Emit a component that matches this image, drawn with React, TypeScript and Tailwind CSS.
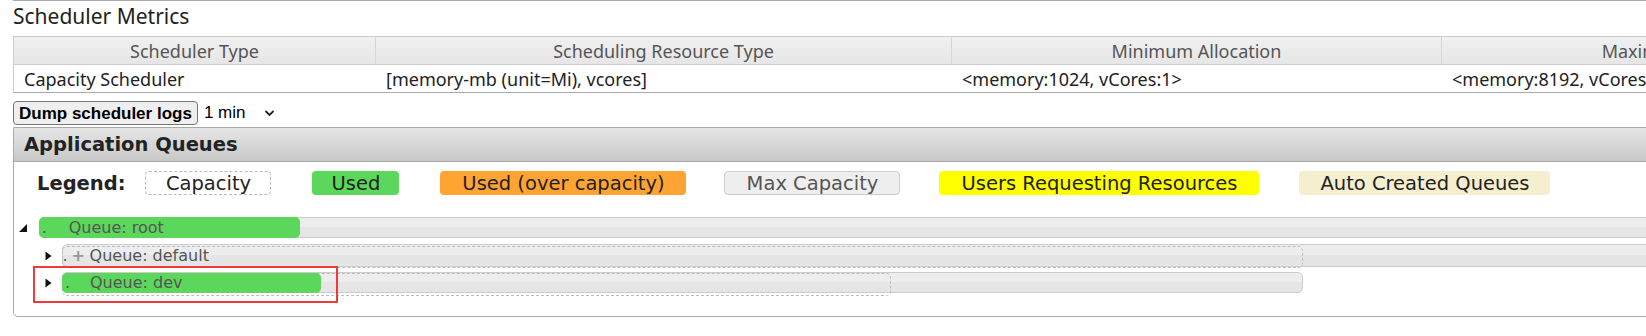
import { FC } from 'react';

type Legend = { label: string; className: string };

const legendItems: Legend[] = [
  { label: 'Capacity', className: 'ml-[20px] w-[126px] border border-dashed border-[#bbb] bg-white text-[#222]' },
  { label: 'Used', className: 'ml-[41px] w-[87px] bg-[#5bd75b] text-[#222]' },
  { label: 'Used (over capacity)', className: 'ml-[41px] w-[246px] bg-[#ffa333] text-[#222]' },
  { label: 'Max Capacity', className: 'ml-[38px] w-[176px] border border-[#ccc] bg-[#eee] text-[#555]' },
  { label: 'Users Requesting Resources', className: 'ml-[39px] w-[320px] bg-[#ffff00] text-[#222]' },
  { label: 'Auto Created Queues', className: 'ml-[40px] w-[251px] bg-[#f5efd0] text-[#222]' },
];

const headers = ['Scheduler Type', 'Scheduling Resource Type', 'Minimum Allocation', 'Maximum Allocation'];
const values = ['Capacity Scheduler', '[memory-mb (unit=Mi), vcores]', '<memory:1024, vCores:1>', '<memory:8192, vCores:4>'];

const Expanded = () => (
  <svg width="8" height="8" viewBox="0 0 8 8" className="shrink-0">
    <polygon points="8,0 8,8 0,8" fill="#111" />
  </svg>
);

const Collapsed = () => (
  <svg width="7" height="10" viewBox="0 0 7 10" className="shrink-0">
    <polygon points="0.5,0.5 6.5,5 0.5,9.5" fill="#111" />
  </svg>
);

const barBg = 'bg-[linear-gradient(#ededed_50%,#e5e5e5_50%)]';

const QueueTree: FC = () => (
  <div className="font-['DejaVu_Sans',sans-serif] text-[16px] text-[#555]">
    {/* root */}
    <div className="mt-[22px] flex h-[21px] items-center">
      <div className="ml-[5px] w-[20px]">
        <Expanded />
      </div>
      <div className={`relative h-[21px] w-[1900px] rounded-[5px] border border-[#ccc] ${barBg}`}>
        <div className="absolute -top-px -left-px h-[21px] w-[261px] rounded-[5px] bg-[#5bd75b]" />
        <div className="relative flex h-full items-center leading-none">
          <span className="ml-[2px] w-[27px]">.</span>
          <span>Queue: root</span>
        </div>
      </div>
    </div>

    {/* default */}
    <div className="mt-[6px] flex h-[23px] items-center">
      <div className="ml-[31px] w-[17px]">
        <Collapsed />
      </div>
      <div className={`relative h-[23px] w-[1900px] rounded-l-[5px] border border-[#ccc] ${barBg}`}>
        <div className="absolute top-px -left-px h-[22px] w-[1241px] rounded-[5px] border border-dashed border-[#bbb]" />
        <div className="relative flex h-full items-center leading-none">
          <span className="w-[9px]">.</span>
          <span className="w-[18px] font-bold text-[#999]">+</span>
          <span>Queue: default</span>
        </div>
      </div>
    </div>

    {/* dev */}
    <div className="mt-[5px] flex h-[21px] items-start">
      <div className="mt-[6px] ml-[31px] w-[17px]">
        <Collapsed />
      </div>
      <div className={`relative h-[21px] w-[1241px] rounded-[5px] border border-[#ccc] ${barBg}`}>
        <div className="absolute top-0 -left-px h-[23px] w-[829px] rounded-[5px] border border-dashed border-[#bbb]" />
        <div className="absolute top-0 -left-px h-[20px] w-[259px] rounded-[5px] bg-[#5bd75b]" />
        <div className="relative flex h-full items-center leading-none">
          <span className="ml-[2px] w-[25px]">.</span>
          <span>Queue: dev</span>
        </div>
      </div>
    </div>
  </div>
);

const App: FC = () => (
  <div className="relative h-[336px] w-[1646px] overflow-hidden bg-white">
    <div className="w-[2000px] pl-[13px]">
      <div className="h-px bg-[#aaa]" />
      <h3 className="mt-px h-[28px] font-['Noto_Sans',sans-serif] text-[21px] leading-[28px] text-[#222]">
        Scheduler Metrics
      </h3>

      <div className="mt-[6px] font-['Noto_Sans',sans-serif] text-[18px]">
        <div className="grid h-[29px] grid-cols-[362px_576px_490px_494px] border-y border-l border-[#ccc] bg-[linear-gradient(#f0f0f0,#e6e6e6)] text-[#555]">
          {headers.map((h) => (
            <div key={h} className="flex items-center justify-center border-r border-[#d6d6d6] leading-none">
              {h}
            </div>
          ))}
        </div>
        <div className="grid h-[28px] grid-cols-[362px_576px_490px_494px] border-b border-l border-[#aaa] border-l-[#ccc] text-[#222]">
          {values.map((v) => (
            <div key={v} className="flex items-center pl-[10px] leading-none">
              {v}
            </div>
          ))}
        </div>
      </div>

      <div className="mt-[8px] flex h-[24px] items-center font-['Liberation_Sans',sans-serif] text-[17px]">
        <button className="h-[24px] rounded-[4px] border border-[#767676] bg-[#efefef] px-[5px] font-bold leading-none text-black">
          Dump scheduler logs
        </button>
        <span className="ml-[6px] text-black">1 min</span>
        <svg width="11" height="8" viewBox="0 0 11 8" className="ml-[19px]">
          <path d="M1.5 2 L5.5 6 L9.5 2" fill="none" stroke="#222" strokeWidth="1.8" />
        </svg>
      </div>

      <div className="mt-[2px] h-[190px] w-[1900px] rounded-bl-[5px] border border-[#aaa]">
        <div className="flex h-[34px] items-center border-b border-[#aaa] bg-[linear-gradient(#e6e6e6,#c8c8c8)] pl-[10px] font-['DejaVu_Sans',sans-serif] text-[19.5px] font-bold text-[#222]">
          Application Queues
        </div>

        <div className="mt-[9px] flex h-[24px] items-center pl-[23px] font-['DejaVu_Sans',sans-serif] text-[19.5px]">
          <span className="pt-[2px] font-bold text-[#222]">Legend:</span>
          {legendItems.map((l) => (
            <div key={l.label} className={`flex h-[24px] items-center justify-center rounded-[4px] pt-[2px] leading-none ${l.className}`}>
              {l.label}
            </div>
          ))}
        </div>

        <QueueTree />
      </div>
    </div>

    <div className="absolute top-[266px] left-[33px] h-[37px] w-[305px] border-2 border-[#ef3b3b]" />
  </div>
);

export default App;
